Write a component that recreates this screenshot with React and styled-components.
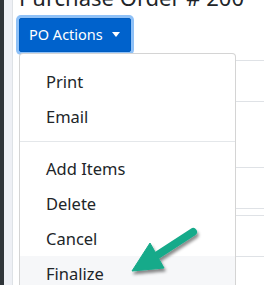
import React from "react";
import styled, { createGlobalStyle } from "styled-components";

const Global = createGlobalStyle`
  html, body { margin: 0; padding: 0; background: #fff; }
  body {
    font-family: "Noto Sans", "Open Sans", sans-serif;
    color: #212529;
    overflow: hidden;
  }
`;

const Page = styled.div`
  position: relative;
  display: flex;
  width: 264px;
  height: 285px;
  overflow: hidden;
`;

const Rail = styled.div`
  width: 4px;
  flex: none;
  background: #2f3539;
`;

const SideNav = styled.div`
  width: 8px;
  flex: none;
  background: #eef0f5;
  border-right: 1px solid #dee2e6;
`;

const Main = styled.div`
  flex: 1;
  padding-left: 6px;
  display: flex;
  flex-direction: column;
`;

const Title = styled.h2`
  margin: -17px 0 7px 0;
  height: 28px;
  font-size: 22px;
  line-height: 28px;
  font-weight: 400;
  white-space: nowrap;
  color: #212529;
`;

const Dropdown = styled.div`
  position: relative;
  align-self: flex-start;
`;

const ActionButton = styled.button`
  display: inline-flex;
  align-items: center;
  height: 34px;
  padding: 0 10px 0 9px;
  font-family: inherit;
  font-size: 14.5px;
  line-height: 1.5;
  color: #fff;
  background: #0062cc;
  border: 1px solid #005cbf;
  border-radius: 2px;
  box-shadow: 0 0 0 3px #8fc1f7;
  cursor: pointer;
`;

const Caret = styled.span`
  display: inline-block;
  margin-left: 9px;
  margin-top: -1px;
  border-top: 5px solid #fff;
  border-left: 4.5px solid transparent;
  border-right: 4.5px solid transparent;
`;

const Menu = styled.div`
  position: absolute;
  z-index: 2;
  left: 0;
  top: 35px;
  width: 215px;
  padding: 10px 0;
  background: #fff;
  border: 1px solid rgba(0, 0, 0, 0.17);
  border-radius: 4px;
`;

const Item = styled.div`
  height: 35px;
  padding: 0 26px;
  box-sizing: border-box;
  display: flex;
  align-items: center;
  font-size: 16.5px;
  color: #212529;
  background: ${(p) => (p.$active ? "#f6f7f9" : "transparent")};
`;

const Divider = styled.div`
  height: 0;
  margin: 7px 0 9px;
  border-top: 1px solid #e4e7ea;
`;

const Table = styled.div`
  display: flex;
  flex-direction: column;
`;

const Row = styled.div`
  height: ${(p) => p.$h}px;
  border-bottom: 1px solid #dfe2e6;
  flex: none;
`;

const Overlay = styled.svg`
  position: absolute;
  left: 0;
  top: 0;
  pointer-events: none;
  z-index: 5;
`;

export default function App() {
  const rows = [8, 40, 65, 40, 6, 40, 40];
  return (
    <>
      <Global />
      <Page>
        <Rail />
        <SideNav />
        <Main>
          <Title>Purchase Order # 200</Title>
          <Dropdown>
            <ActionButton>
              PO Actions
              <Caret />
            </ActionButton>
            <Menu>
              <Item>Print</Item>
              <Item>Email</Item>
              <Divider />
              <Item>Add Items</Item>
              <Item>Delete</Item>
              <Item>Cancel</Item>
              <Item $active>Finalize</Item>
            </Menu>
          </Dropdown>
          <Table>
            {rows.map((h, i) => (
              <Row key={i} $h={h} />
            ))}
          </Table>
        </Main>
        <Overlay width="264" height="285" viewBox="0 0 264 285">
          <defs>
            <filter id="sh" x="-20%" y="-20%" width="150%" height="150%">
              <feDropShadow dx="1.5" dy="3" stdDeviation="1.6" floodColor="#000" floodOpacity="0.45" />
            </filter>
          </defs>
          <g filter="url(#sh)" fill="#17aa8a" stroke="#17aa8a">
            <line x1="193" y1="232" x2="156" y2="256" strokeWidth="8" strokeLinecap="round" />
            <polygon points="132,271 150,243 164,268" strokeWidth="1" strokeLinejoin="round" />
          </g>
        </Overlay>
      </Page>
    </>
  );
}
